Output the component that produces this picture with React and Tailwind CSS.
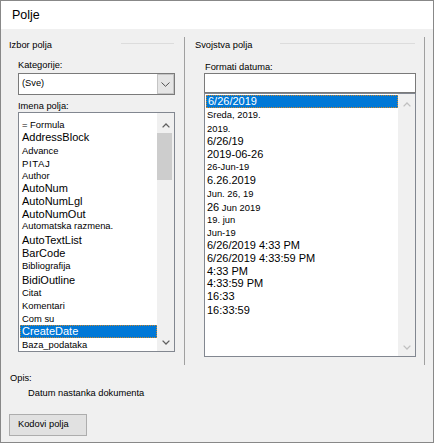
import React from "react"

const fieldNames = [
  { text: "= Formula", big: false, h: 11 },
  { text: "AddressBlock", big: true, h: 13 },
  { text: "Advance", big: false, h: 14 },
  { text: "PITAJ", mid: true, h: 12 },
  { text: "Author", big: false, h: 12 },
  { text: "AutoNum", big: true, h: 13 },
  { text: "AutoNumLgl", big: true, h: 13 },
  { text: "AutoNumOut", big: true, h: 12 },
  { text: "Automatska razmena.", big: false, h: 13 },
  { text: "AutoTextList", big: true, h: 14 },
  { text: "BarCode", big: true, h: 13 },
  { text: "Bibliografija", big: false, h: 13 },
  { text: "BidiOutline", big: true, h: 14 },
  { text: "Citat", big: false, h: 13 },
  { text: "Komentari", big: false, h: 13 },
  { text: "Com su", big: false, h: 12 },
  { text: "CreateDate", big: true, h: 13, selected: true },
  { text: "Baza_podataka", big: false, h: 14 },
]

const dateFormats = [
  { text: "6/26/2019", big: true, h: 13, selected: true },
  { text: "Sreda, 2019.", big: false, h: 15 },
  { text: "2019.", big: false, h: 12 },
  { text: "6/26/19", big: true, h: 12 },
  { text: "2019-06-26", big: true, h: 14 },
  { text: "26-Jun-19", big: false, h: 13 },
  { text: "6.26.2019", big: true, h: 13 },
  { text: "Jun. 26, 19", big: false, h: 14 },
  { text: "26", rest: "\u00a0Jun 2019", big: true, h: 13 },
  { text: "19. jun", big: false, h: 13 },
  { text: "Jun-19", big: false, h: 12 },
  { text: "6/26/2019 4:33 PM", big: true, h: 13 },
  { text: "6/26/2019 4:33:59 PM", big: true, h: 13 },
  { text: "4:33 PM", big: true, h: 12 },
  { text: "4:33:59 PM", big: true, h: 13 },
  { text: "16:33", big: true, h: 13 },
  { text: "16:33:59", big: true, h: 14 },
]

function Chevron({ up, color = "#606060" }) {
  return (
    <svg width="8" height="5" viewBox="0 0 8 5" aria-hidden="true">
      <path
        d={up ? "M0.6 4.4 L4 1 L7.4 4.4" : "M0.6 0.6 L4 4 L7.4 0.6"}
        fill="none"
        stroke={color}
        strokeWidth="1.3"
      />
    </svg>
  )
}

function sizeClass(item) {
  if (item.big) return "text-[11px]"
  if (item.mid) return "text-[9.6px] tracking-[0.6px]"
  return "text-[9.4px]"
}

function ListRow({ item, indent }) {
  if (item.selected) {
    return (
      <div
        style={{ height: item.h }}
        className={`ml-px flex items-center border border-dotted border-[#c8862e] bg-[#0078d7] pl-px text-white whitespace-nowrap ${sizeClass(item)}`}
      >
        {item.text}
      </div>
    )
  }
  return (
    <div
      style={{ height: item.h }}
      className={`flex items-center whitespace-nowrap ${indent} ${sizeClass(item)}`}
    >
      <span>
        {item.text}
        {item.rest && <span className="text-[9.4px]">{item.rest}</span>}
      </span>
    </div>
  )
}

function GroupHeader({ label, lineWidth }) {
  return (
    <div className="mt-[2px] flex h-[12px] items-start">
      <span className="text-[9.3px] leading-[12px]">{label}</span>
      <div className={`ml-auto mt-[4px] h-px bg-[#dcdcdc] ${lineWidth}`} />
    </div>
  )
}

export default function App() {
  return (
    <div className="flex h-[443px] w-[434px] flex-col border border-[#888888] bg-[#f0f0f0] font-['Liberation_Sans',Arial,sans-serif] text-black">
      {/* title */}
      <div className="flex h-[28px] items-center bg-white pl-[11px] text-[12.5px]">
        Polje
      </div>

      {/* groups */}
      <div className="mt-[8px] flex h-[328px] pl-[8px]">
        <div className="flex w-[166px] flex-col">
          <GroupHeader label="Izbor polja" lineWidth="w-[53px] mr-px" />
          <div className="mt-[8px] pl-[9px] text-[9.3px] leading-[12px]">Kategorije:</div>
          <div className="ml-[9px] mt-[2px] flex h-[22px] w-[157px] border border-[#7a7a7a] bg-white">
            <div className="flex flex-1 items-center pl-[3px] text-[9.3px]">(Sve)</div>
            <div className="flex w-[17px] items-center justify-center border border-[#c4c4c4] bg-[#e5e5e5]">
              <svg width="9" height="5" viewBox="0 0 9 5" aria-hidden="true">
                <path d="M0.5 0.5 L4.5 4.3 L8.5 0.5" fill="none" stroke="#505050" strokeWidth="1" />
              </svg>
            </div>
          </div>
          <div className="mt-[5px] pl-[9px] text-[9.3px] leading-[12px]">Imena polja:</div>
          <div className="ml-[9px] flex h-[240px] w-[157px] overflow-hidden border border-[#828790] bg-white">
            <div className="flex flex-1 flex-col pt-[7px]">
              {fieldNames.map((item) => (
                <ListRow key={item.text} item={item} indent="pl-[3px]" />
              ))}
            </div>
            <div className="flex w-[17px] flex-col bg-[#f0f0f0]">
              <div className="flex h-[20px] justify-center pt-[10px]">
                <Chevron up />
              </div>
              <div className="h-[47px] w-[15px] bg-[#cdcdcd]" />
              <div className="mt-auto flex h-[17px] items-center justify-center">
                <Chevron />
              </div>
            </div>
          </div>
        </div>

        <div className="ml-[9px] w-px bg-[#a0a0a0]" />

        <div className="ml-[10px] flex w-[220px] flex-col">
          <GroupHeader label="Svojstva polja" lineWidth="w-[135px]" />
          <div className="mt-[10px] pl-[10px] text-[9.3px] leading-[12px]">Formati datuma:</div>
          <div className="ml-[9px] h-[20px] w-[212px] border border-[#7a7a7a] bg-white" />
          <div className="ml-[9px] flex h-[264px] w-[212px] overflow-hidden border border-[#828790] bg-white">
            <div className="flex flex-1 flex-col pt-px">
              {dateFormats.map((item) => (
                <ListRow key={item.text + (item.rest || "")} item={item} indent="pl-[2px]" />
              ))}
            </div>
            <div className="flex w-[17px] flex-col bg-[#f0f0f0]">
              <div className="flex h-[17px] items-center justify-center pt-[4px]">
                <Chevron up color="#c0c0c0" />
              </div>
              <div className="mt-auto flex h-[17px] items-center justify-center">
                <Chevron color="#c0c0c0" />
              </div>
            </div>
          </div>
        </div>

        <div className="ml-[9px] w-px bg-[#a0a0a0]" />
      </div>

      {/* description + button */}
      <div className="mt-[7px] pl-[9px] text-[9.3px] leading-[12px]">Opis:</div>
      <div className="mt-[3px] pl-[27px] text-[9.3px] leading-[12px]">Datum nastanka dokumenta</div>
      <div className="ml-[8px] mt-[15px] flex h-[22px] w-[78px] items-center border border-[#adadad] bg-[#e1e1e1] pl-[8px] text-[9.3px]">
        Kodovi polja
      </div>
    </div>
  )
}
